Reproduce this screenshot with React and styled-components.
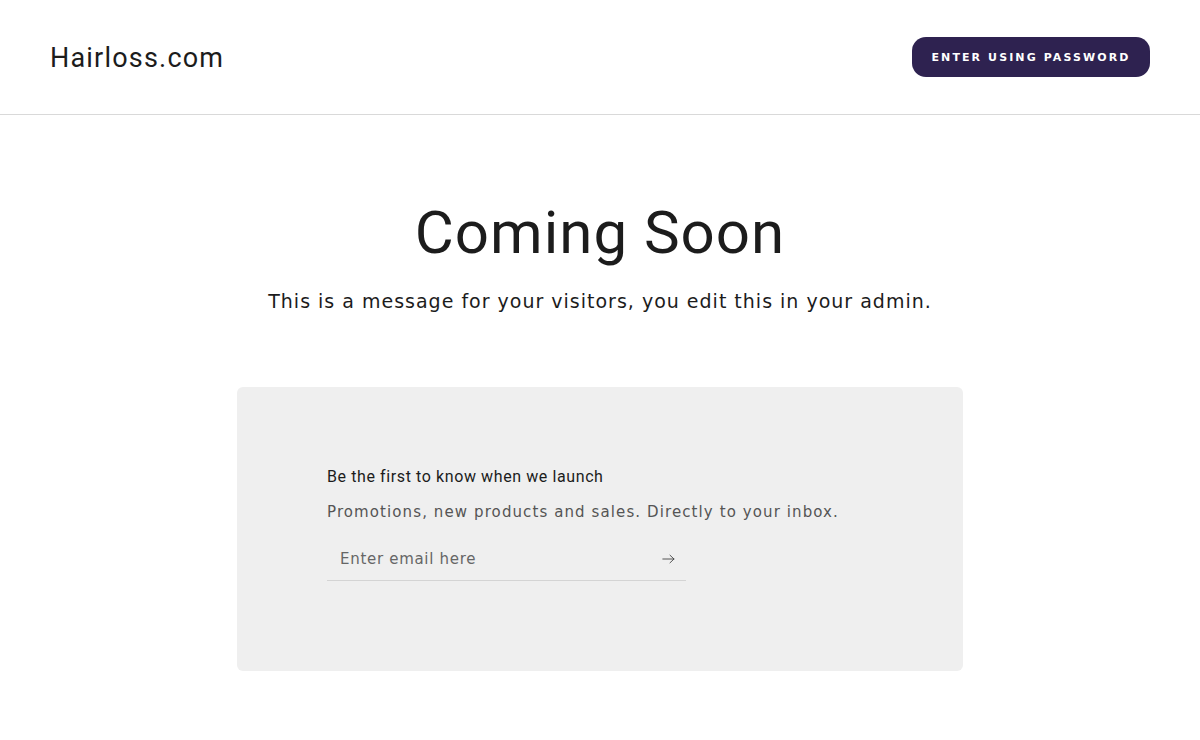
import React from "react";
import styled, { createGlobalStyle } from "styled-components";

const Global = createGlobalStyle`
  html, body { margin: 0; padding: 0; background: #fff; }
  body { font-family: Roboto, "Liberation Sans", sans-serif; color: #1c1c1c; }
  * { box-sizing: border-box; }
`;

const Header = styled.header`
  height: 115px;
  display: flex;
  align-items: center;
  justify-content: space-between;
  padding: 0 50px;
  border-bottom: 1px solid #d9d9d9;
`;

const Logo = styled.a`
  font-family: Roboto, sans-serif;
  font-size: 27px;
  color: #1c1c1c;
  text-decoration: none;
  letter-spacing: 1.2px;
  margin-top: 1px;
`;

const PasswordButton = styled.button`
  width: 238px;
  height: 40px;
  border: none;
  border-radius: 14px;
  background: #2e2250;
  color: #fff;
  font-family: "DejaVu Sans", sans-serif;
  font-weight: 700;
  font-size: 11px;
  letter-spacing: 2.1px;
  text-transform: uppercase;
  cursor: pointer;
  margin-top: 0;
`;

const Main = styled.main`
  display: flex;
  flex-direction: column;
  align-items: center;
  padding-top: 82px;
`;

const Title = styled.h1`
  margin: 0;
  font-family: Roboto, sans-serif;
  font-weight: 400;
  font-size: 60px;
  line-height: 72px;
  letter-spacing: 1px;
  color: #1c1c1c;
`;

const Message = styled.p`
  margin: 18px 0 0;
  font-family: "DejaVu Sans", sans-serif;
  font-size: 19px;
  line-height: 28px;
  letter-spacing: 1px;
  color: #1c1c1c;
`;

const Card = styled.section`
  margin-top: 72px;
  width: 726px;
  height: 284px;
  background: #efefef;
  border-radius: 6px;
  padding: 78px 90px 0;
`;

const CardTitle = styled.h2`
  margin: 0;
  font-family: Roboto, sans-serif;
  font-weight: 400;
  font-size: 16px;
  line-height: 24px;
  letter-spacing: 0.6px;
  color: #1c1c1c;
`;

const CardText = styled.p`
  margin: 11px 0 0;
  font-family: "DejaVu Sans", sans-serif;
  font-size: 15px;
  line-height: 24px;
  letter-spacing: 1.1px;
  color: #555;
`;

const Field = styled.form`
  margin-top: 10px;
  width: 359px;
  height: 47px;
  display: flex;
  align-items: center;
  border-bottom: 1px solid #d4d4d4;
  padding: 4px 12px 0 13px;
`;

const EmailInput = styled.input`
  flex: 1;
  border: none;
  background: transparent;
  outline: none;
  font-family: "DejaVu Sans", sans-serif;
  font-size: 15px;
  letter-spacing: 0.7px;
  color: #1c1c1c;
  padding: 0;
  &::placeholder { color: #666; }
`;

const SubmitButton = styled.button`
  border: none;
  background: transparent;
  padding: 0;
  width: 14px;
  height: 14px;
  display: flex;
  align-items: center;
  justify-content: center;
  cursor: pointer;
  color: #444;
  margin-right: -1px;
`;

export default function App() {
  return (
    <>
      <Global />
      <Header>
        <Logo href="#">Hairloss.com</Logo>
        <PasswordButton>Enter using password</PasswordButton>
      </Header>
      <Main>
        <Title>Coming Soon</Title>
        <Message>This is a message for your visitors, you edit this in your admin.</Message>
        <Card>
          <CardTitle>Be the first to know when we launch</CardTitle>
          <CardText>Promotions, new products and sales. Directly to your inbox.</CardText>
          <Field onSubmit={(e) => e.preventDefault()}>
            <EmailInput type="email" placeholder="Enter email here" />
            <SubmitButton type="submit" aria-label="Subscribe">
              <svg width="13" height="10" viewBox="0 0 13 10" fill="none" stroke="currentColor" strokeWidth="0.9" strokeLinecap="round" strokeLinejoin="round">
                <path d="M0.8 5H12M8 1.2L12 5 8 8.8" />
              </svg>
            </SubmitButton>
          </Field>
        </Card>
      </Main>
    </>
  );
}
